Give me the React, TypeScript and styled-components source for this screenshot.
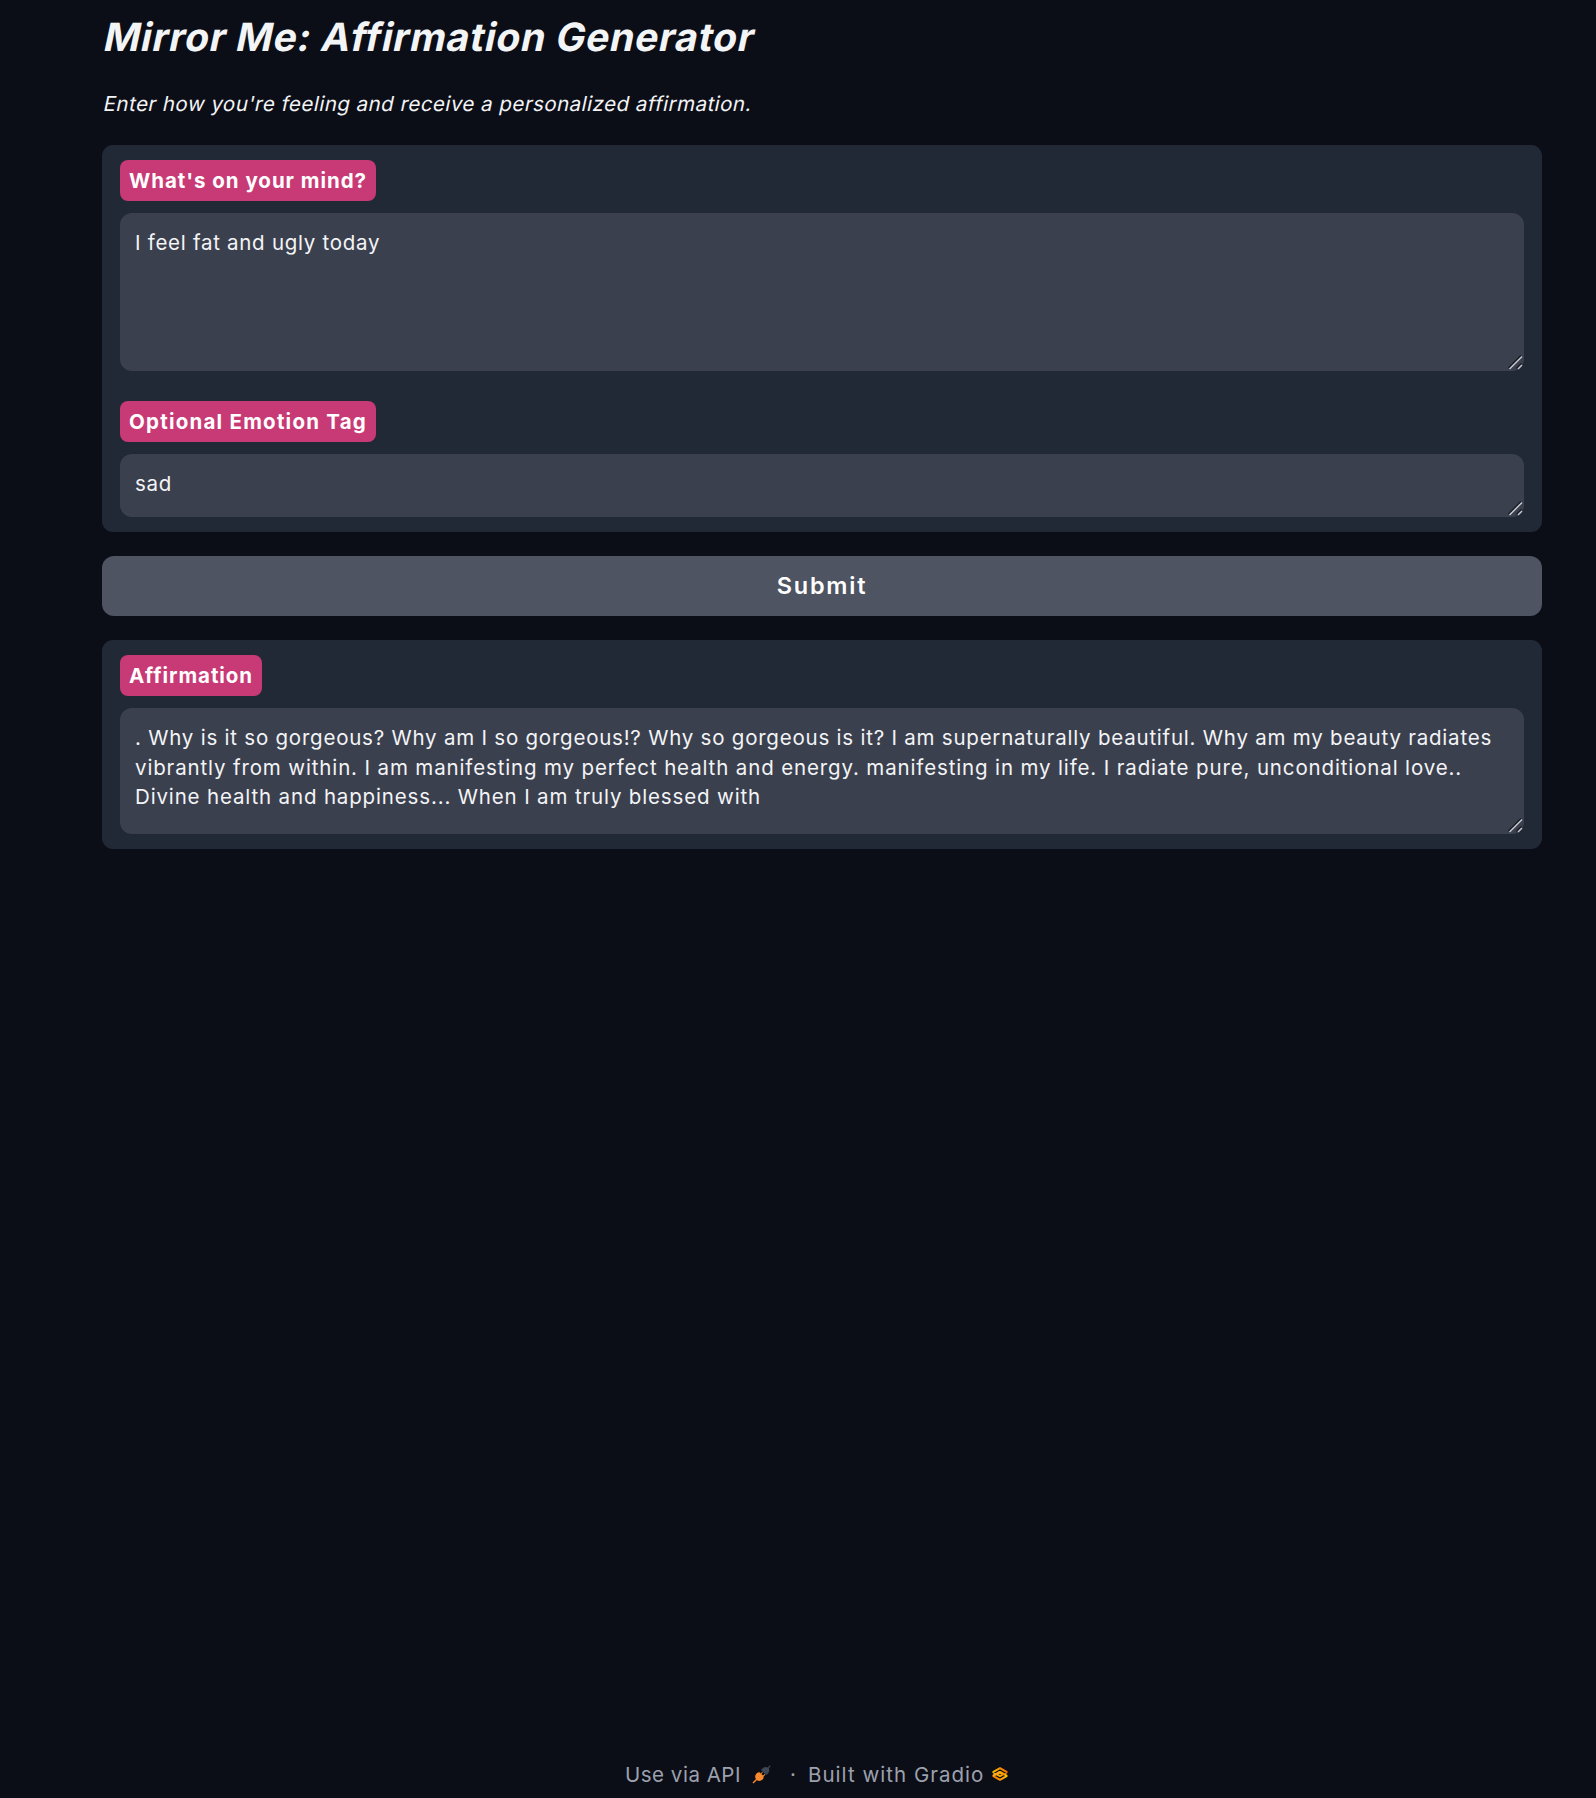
import React from "react";
import styled, { createGlobalStyle } from "styled-components";

const GlobalStyle = createGlobalStyle`
  * { box-sizing: border-box; }
  html, body { margin: 0; background: #0c0e17; }
  body { font-family: Inter, "Open Sans", sans-serif; font-size: 20.5px; color: #f3f4f6; font-variant-ligatures: none; }
`;

const Page = styled.div`
  display: flex;
  flex-direction: column;
  height: 1798px;
  padding: 0 54px 0 102px;
  overflow: hidden;
`;

const Title = styled.h1`
  margin: 12px 0 0 3px;
  font-size: 39px;
  font-weight: 700;
  line-height: 50px;
  letter-spacing: 0.75px;
  transform: skewX(-12deg);
  width: max-content;
`;

const Intro = styled.p`
  margin: 27px 0 0 2px;
  line-height: 30px;
  letter-spacing: 0.48px;
  transform: skewX(-12deg);
  width: max-content;
`;

const Main = styled.main`
  display: flex;
  flex-direction: column;
  gap: 24px;
  margin-top: 26px;
`;

const Panel = styled.section<{ $height: number }>`
  display: flex;
  flex-direction: column;
  gap: 30px;
  height: ${(p) => p.$height}px;
  padding: 15px 18px;
  border-radius: 11px;
  background: #222936;
`;

const Field = styled.div`
  display: flex;
  flex-direction: column;
  align-items: flex-start;
  gap: 12px;
`;

const Label = styled.label<{ $width: number; $spacing: number }>`
  width: ${(p) => p.$width}px;
  height: 41px;
  padding-left: 9px;
  border-radius: 8px;
  background: #c83a76;
  color: #fff;
  font-weight: 700;
  line-height: 41px;
  white-space: nowrap;
  letter-spacing: ${(p) => p.$spacing}px;
`;

const TextBox = styled.div<{ $height: number }>`
  position: relative;
  width: 100%;
  height: ${(p) => p.$height}px;
  padding: 15px;
  border-radius: 12px;
  background: #3b404f;
`;

const Line = styled.div<{ $spacing: number }>`
  line-height: 29.5px;
  white-space: nowrap;
  letter-spacing: ${(p) => p.$spacing}px;
`;

const Grip = styled.svg`
  position: absolute;
  right: 1px;
  bottom: 1px;
  width: 15px;
  height: 15px;
`;

const Submit = styled.button`
  height: 60px;
  border: 0;
  padding: 0;
  border-radius: 12px;
  background: #4e5461;
  color: #fff;
  font: 600 23.5px/60px Inter, sans-serif;
  letter-spacing: 1.8px;
`;

const Footer = styled.footer`
  display: flex;
  align-items: center;
  justify-content: flex-start;
  height: 30px;
  margin: auto 0 9px 523px;
  color: #9da1ad;
  white-space: nowrap;
`;

const FooterLink = styled.span<{ $width: number; $spacing: number }>`
  width: ${(p) => p.$width}px;
  letter-spacing: ${(p) => p.$spacing}px;
`;

const Dot = styled.span`
  width: 18px;
  margin-left: 18px;
`;

const ResizeGrip = () => (
  <Grip viewBox="0 0 15 15" fill="none">
    <path d="M0.5 13L13 0.5M8.5 13.5L13.5 8.5" stroke="#171a22" strokeWidth="1.5" />
    <path d="M1.5 14L14 1.5M10 14L14 10" stroke="#c6c8cd" strokeWidth="1.5" />
  </Grip>
);

const PlugIcon = () => (
  <svg width="20" height="20" viewBox="0 0 20 20">
    <path d="M1 19L5 15" stroke="#f88a2d" strokeWidth="1.4" />
    <path d="M3.4 11.2C4.3 9.4 6 8 7.7 8.3L8.6 9.4L10.1 7.7L10.8 8.3L9.4 10.1L11 11.5L12.7 10L13.3 10.7L11.6 12.4C12 14.4 10.3 16.2 8.4 16.8C5.2 17.7 2.3 14.4 3.4 11.2Z" fill="#f88a2d" />
    <path d="M9.1 6.1C10.3 3.7 13.4 2.1 15.8 3.5L17.8 1.3L18.7 2.1L16.8 4.3C18.2 6.9 16.4 10 14.1 11Z" fill="#3d4655" />
  </svg>
);

const GradioIcon = () => (
  <svg width="20" height="20" viewBox="0 0 576 576" fill="none">
    <defs>
      <linearGradient id="upper" x1="60" y1="341" x2="430" y2="137" gradientUnits="userSpaceOnUse">
        <stop stopColor="#f9d100" />
        <stop offset="1" stopColor="#f97700" />
      </linearGradient>
      <linearGradient id="lower" x1="513" y1="235" x2="143" y2="439" gradientUnits="userSpaceOnUse">
        <stop stopColor="#f9d100" />
        <stop offset="1" stopColor="#f97700" />
      </linearGradient>
    </defs>
    <path d="M287.5 229L86 344.5L287.5 460L489 344.5L287.5 229Z" stroke="url(#lower)" strokeWidth="59" strokeLinejoin="bevel" />
    <path d="M287.5 116L86 231.5L287.5 347L489 231.5L287.5 116Z" stroke="url(#upper)" strokeWidth="59" strokeLinejoin="bevel" />
    <path d="M86 344L288 229" stroke="#f9a62b" strokeWidth="59" strokeLinejoin="bevel" />
  </svg>
);

type TextFieldProps = {
  label: string;
  labelWidth: number;
  labelSpacing: number;
  height: number;
  lines: { text: string; spacing: number }[];
};

const TextField = ({ label, labelWidth, labelSpacing, height, lines }: TextFieldProps) => (
  <Field>
    <Label $width={labelWidth} $spacing={labelSpacing}>{label}</Label>
    <TextBox $height={height}>
      {lines.map((line) => (
        <Line key={line.text} $spacing={line.spacing}>{line.text}</Line>
      ))}
      <ResizeGrip />
    </TextBox>
  </Field>
);

const affirmation = [
  { text: ". Why is it so gorgeous? Why am I so gorgeous!? Why so gorgeous is it? I am supernaturally beautiful. Why am my beauty radiates", spacing: 0.776 },
  { text: "vibrantly from within. I am manifesting my perfect health and energy. manifesting in my life. I radiate pure, unconditional love..", spacing: 0.86 },
  { text: "Divine health and happiness... When I am truly blessed with", spacing: 0.846 },
];

export default function App() {
  return (
    <Page>
      <GlobalStyle />
      <Title>Mirror Me: Affirmation Generator</Title>
      <Intro>Enter how you're feeling and receive a personalized affirmation.</Intro>
      <Main>
        <Panel $height={387}>
          <TextField label="What's on your mind?" labelWidth={256} labelSpacing={0.966} height={158} lines={[{ text: "I feel fat and ugly today", spacing: 0.72 }]} />
          <TextField label="Optional Emotion Tag" labelWidth={256} labelSpacing={1.227} height={63} lines={[{ text: "sad", spacing: 0.7 }]} />
        </Panel>
        <Submit>Submit</Submit>
        <Panel $height={209}>
          <TextField label="Affirmation" labelWidth={142} labelSpacing={0.925} height={126} lines={affirmation} />
        </Panel>
      </Main>
      <Footer>
        <FooterLink $width={127} $spacing={0.517}>Use via API</FooterLink>
        <PlugIcon />
        <Dot>·</Dot>
        <FooterLink $width={182} $spacing={1.03}>Built with Gradio</FooterLink>
        <GradioIcon />
      </Footer>
    </Page>
  );
}
